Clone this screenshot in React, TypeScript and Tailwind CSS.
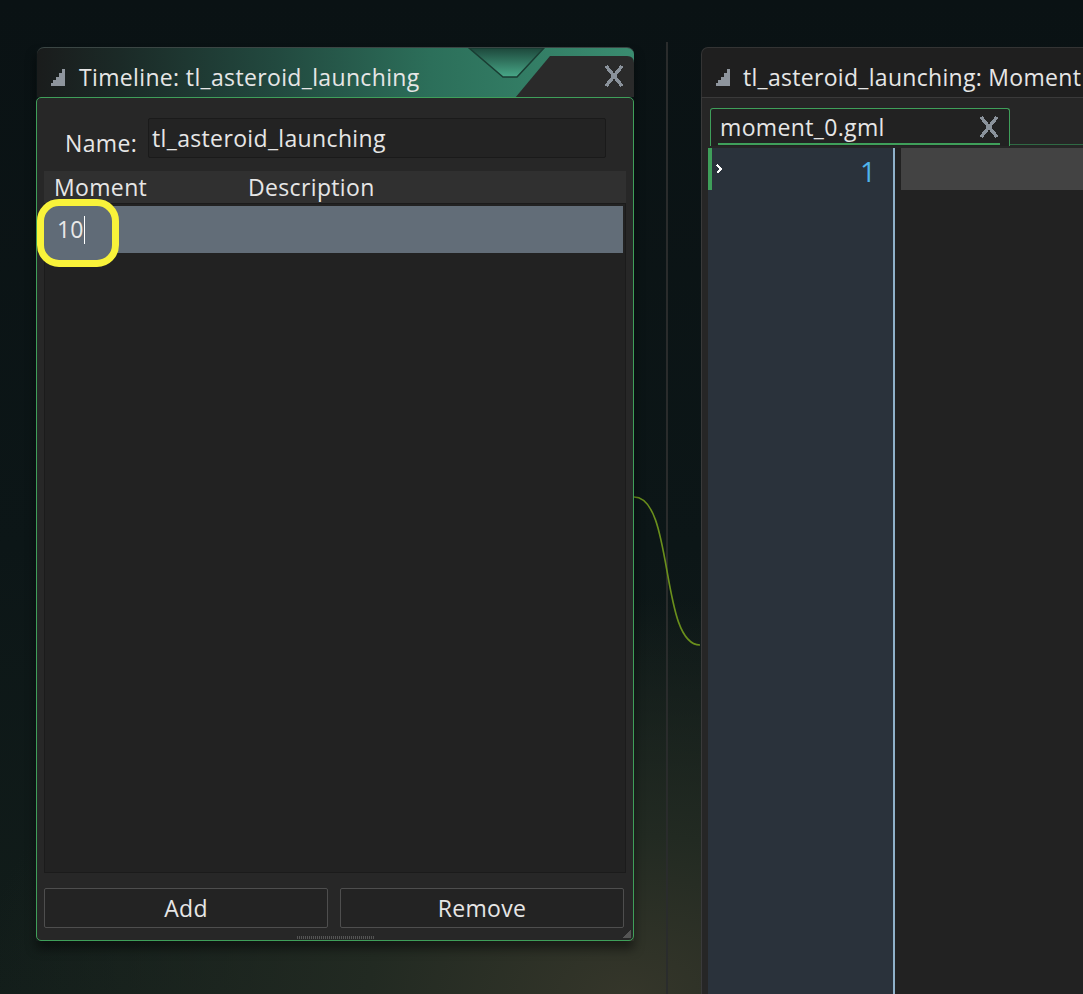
import React from "react";

const font = { fontFamily: '"Open Sans", "Noto Sans", sans-serif' };

function StairIcon() {
  return (
    <svg width="14" height="17" viewBox="0 0 14 17" shapeRendering="crispEdges">
      <polygon
        points="0,17 14,17 14,0 11,0 11,4 8,4 8,8 5,8 5,11 2,11 2,14 0,14"
        fill="#8e959d"
      />
    </svg>
  );
}

function PixelX({ w = 20, h = 24 }: { w?: number; h?: number }) {
  return (
    <svg width={w} height={h} viewBox="0 0 20 24" shapeRendering="crispEdges">
      <path d="M2 2 L18 22 M18 2 L2 22" stroke="#8a929b" strokeWidth="3.4" fill="none" />
    </svg>
  );
}

function TimelineWindow() {
  return (
    <div className="absolute left-[36px] top-[47px] flex h-[894px] w-[598px] flex-col shadow-[0_8px_10px_rgba(0,0,0,0.45)]">
      {/* title bar */}
      <div className="relative ml-px h-[50px] w-[597px] overflow-hidden rounded-t-[7px] border-t border-[#3b4644] bg-[linear-gradient(90deg,#1a1c1c_0%,#1b2a27_14%,#22493f_40%,#2c6f5a_66%,#3a8c70_100%)]">
        <svg
          className="absolute inset-0"
          width="597"
          height="50"
          viewBox="0 0 597 50"
        >
          <defs>
            <linearGradient id="notch" x1="0" y1="0" x2="0" y2="1">
              <stop offset="0%" stopColor="#1d473b" />
              <stop offset="100%" stopColor="#48a888" />
            </linearGradient>
          </defs>
          <polygon points="432,0 507,0 480,29 466,29" fill="url(#notch)" stroke="#1a3d33" strokeWidth="1.5" />
          <path d="M513 8 L590 8 Q597 8 597 15 L597 50 L478 50 Z" fill="#2a2a2a" />
        </svg>
        <div className="relative flex h-full items-center pl-[14px] pt-[9px]">
          <StairIcon />
          <span className="ml-[14px] text-[23px] tracking-[0.35px] text-[#e6e6e6]">
            Timeline: tl_asteroid_launching
          </span>
        </div>
        <div className="absolute right-[10px] top-[16px]">
          <PixelX />
        </div>
      </div>

      {/* body */}
      <div className="relative flex flex-1 flex-col rounded-[5px] border border-[#3f9f5a] bg-[#272727] px-[7px] pb-[12px]">
        <div className="mt-[20px] flex h-[40px] items-center">
          <span className="ml-[21px] mt-[10px] w-[83px] text-[23px] tracking-[0.35px] text-[#e6e6e6]">
            Name:
          </span>
          <div className="flex h-[40px] w-[458px] items-center rounded-[2px] border border-[#1a1a1a] bg-[#232323] pl-[3px] text-[23px] tracking-[0.35px] text-[#e6e6e6]">
            tl_asteroid_launching
          </div>
        </div>

        <div className="mt-[13px] flex flex-1 flex-col">
          <div className="flex h-[32px] items-center bg-[#303030] text-[23px] tracking-[0.35px] text-[#e6e6e6]">
            <span className="ml-[10px] w-[194px]">Moment</span>
            <span>Description</span>
          </div>
          <div className="relative flex-1 border border-[#1b1b1b] bg-[#222222] pr-[2px] pt-[2px]">
            <div className="flex h-[47px] items-center bg-[#626d78] pl-[12px] text-[23px] text-[#e8e8e8]">
              <span className="relative z-10">10</span>
              <span className="relative z-10 ml-px h-[28px] w-px bg-white" />
            </div>
            <div className="absolute left-[-8px] top-[-5px] h-[68px] w-[82px] rounded-[22px] border-[7px] border-[#f9f33a] bg-[#606b77]" />
          </div>
        </div>

        <div className="mt-[15px] flex gap-[12px]">
          <button className="flex h-[40px] w-[284px] items-center justify-center rounded-[2px] border border-[#4e4e4e] bg-[#232323] text-[23px] tracking-[0.35px] text-[#e6e6e6]">
            Add
          </button>
          <button className="flex h-[40px] w-[284px] items-center justify-center rounded-[2px] border border-[#4e4e4e] bg-[#232323] text-[23px] tracking-[0.35px] text-[#e6e6e6]">
            Remove
          </button>
        </div>

        <div className="absolute bottom-[1px] left-[260px] h-[3px] w-[77px] bg-[repeating-linear-gradient(90deg,#555_0px,#555_1px,transparent_1px,transparent_2px)]" />
        <div className="absolute bottom-[2px] right-[2px] h-[8px] w-[8px] bg-[linear-gradient(135deg,transparent_50%,#555_50%)]" />
      </div>
    </div>
  );
}

function MomentWindow() {
  return (
    <div className="absolute left-[701px] top-[47px] flex h-[960px] w-[382px] flex-col overflow-hidden">
      <div className="flex h-[50px] items-center overflow-hidden rounded-tl-[7px] border-l border-t border-[#343434] bg-[#1f1f1f] pl-[14px] pt-[9px]">
        <StairIcon />
        <span className="ml-[13px] whitespace-nowrap text-[23px] tracking-[0.3px] text-[#e6e6e6]">
          tl_asteroid_launching: Moment
        </span>
      </div>
      <div className="flex flex-1 flex-col border-l border-t border-[#3a3a3a] bg-[#262626]">
        <div className="flex h-[48px] items-end">
          <div className="relative ml-[8px] flex h-[38px] w-[300px] items-center rounded-t-[3px] border border-b-0 border-[#3f9f5a] bg-[#222222] pl-[9px] pb-[1px]">
            <span className="text-[23px] tracking-[0.35px] text-[#e6e6e6]">moment_0.gml</span>
            <div className="absolute right-[9px] top-[6px]">
              <PixelX w={22} h={24} />
            </div>
            <div className="absolute bottom-[1px] left-[7px] right-[9px] h-[2px] bg-[#3f9f5a]" />
          </div>
          <div className="mb-[1px] h-px flex-1 bg-[#2f6a44]" />
        </div>
        <div className="mt-[2px] flex flex-1">
          <div className="ml-[6px] flex w-[185px] flex-col bg-[#2a323b]">
            <div className="flex h-[42px] border-l-[4px] border-[#3f9f5a]">
              <svg className="ml-[4px] mt-[16px]" width="7" height="10" viewBox="0 0 7 10" shapeRendering="crispEdges">
                <path d="M1 1 L5 5 L1 9" stroke="#ffffff" strokeWidth="2" fill="none" />
              </svg>
              <span className="ml-auto mr-[17px] mt-[9px] text-[28px] leading-none text-[#4fb4ea]">1</span>
            </div>
          </div>
          <div className="w-[2px] bg-[#8fb1c9]" />
          <div className="flex-1 bg-[#222222] pl-[6px]">
            <div className="h-[42px] bg-[#434343]" />
          </div>
        </div>
      </div>
    </div>
  );
}

export default function App() {
  return (
    <div
      style={font}
      className="relative h-[994px] w-[1083px] overflow-hidden bg-[#0b1315] bg-[radial-gradient(ellipse_60%_40%_at_58%_100%,#35362a_0%,#222a22_40%,transparent_100%),linear-gradient(180deg,#0a1214_0%,#0c1617_55%,#121d1a_100%)]"
    >
      <div className="absolute left-[666px] top-[42px] h-[952px] w-[2px] bg-[#2a2c2c]" />
      <svg className="absolute left-[634px] top-[490px]" width="68" height="160" viewBox="0 0 68 160">
        <path d="M0 7 C40 7 26 155 66 155" stroke="#6a8f1c" strokeWidth="1.6" fill="none" />
      </svg>
      <TimelineWindow />
      <MomentWindow />
    </div>
  );
}
